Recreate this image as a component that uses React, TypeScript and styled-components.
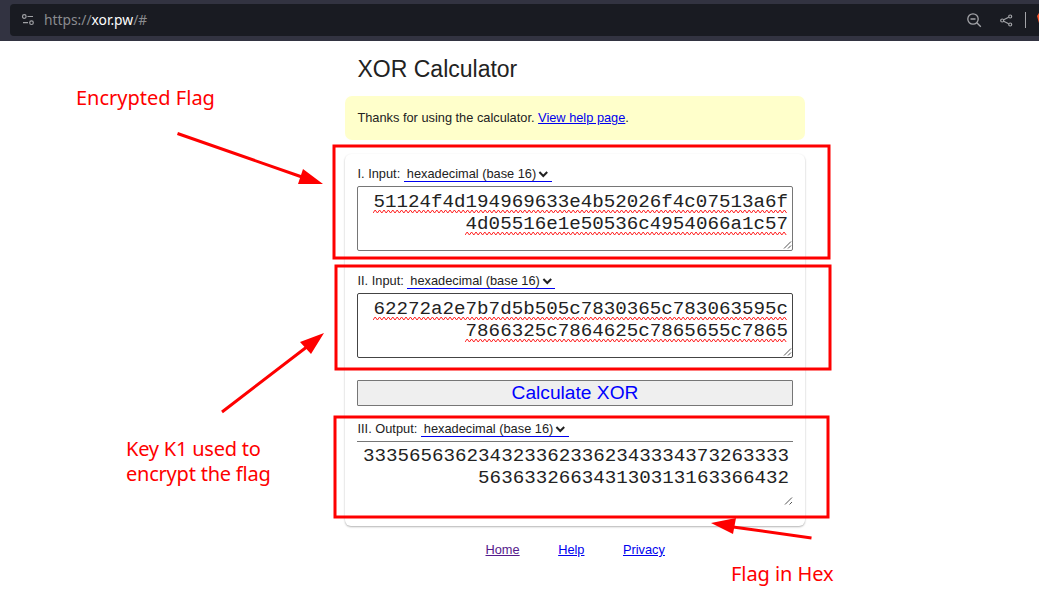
import React from "react";
import styled, { createGlobalStyle } from "styled-components";

const Global = createGlobalStyle`
  * { box-sizing: border-box; }
  body { margin: 0; background: #fff; overflow: hidden; color: #222; font-family: "Liberation Sans", Arial, sans-serif; font-size: 12.8px; }
`;
const Page = styled.div`position: relative; width: 1039px; height: 591px; overflow: hidden;`;
const Browser = styled.header`height: 41px; background: #323341; padding: 4px 0 5px 10px;`;
const Address = styled.div`
  height: 32px; background: #191b22; border-radius: 4px 0 0 4px; display: flex; align-items: center;
  padding-left: 11px; color: #8a8b8f; font: 13.8px "Noto Sans", sans-serif;
`;
const Url = styled.div`flex: 1; margin: 0 0 2px 9px; b { color: #fff; font-weight: 400; }`;
const Tools = styled.div`display: flex; align-items: center; width: 72px; height: 32px; overflow: hidden; svg { flex: none; }`;
const ShareIcon = styled.svg`margin-left: 18px;`;
const Divider = styled.i`width: 1px; height: 16px; background: #a3a4a8; margin: 0 11px 0 12px; flex: none;`;
const Main = styled.main`width: 460px; margin-left: 345px; padding-top: 14px;`;
const Title = styled.h1`margin: 0 0 12px 12.5px; font-size: 23px; line-height: 29px; font-weight: 400;`;
const Notice = styled.div`height: 44px; border-radius: 7px; background: #ffffcb; padding: 14px 12.4px; line-height: 16px;`;
const Link = styled.a<{ $visited?: boolean }>`color: ${(p) => (p.$visited ? "#551a8b" : "#0000ee")}; text-decoration: underline;`;
const Card = styled.section`
  margin-top: 14px; height: 372px; padding: 10px 12px; border-radius: 6px; box-shadow: 0 1px 2px rgba(0,0,0,.3);
`;
const Field = styled.div`height: 107px;`;
const Label = styled.div`display: flex; height: 19px; line-height: 20px; white-space: pre; padding-left: 0.5px;`;
const Select = styled.span`
  display: flex; align-items: center; height: 18px; margin-left: 3.6px; padding: 2px 0 0 3px; width: 148px;
  border-bottom: 1px solid #0000ee;
  svg { margin: 1px 0 0 2px; }
`;
const Area = styled.div<{ $border: string; $output?: boolean }>`
  position: relative; width: 436px; height: 65px; margin-top: 3px; padding: ${(p) => (p.$output ? "3px 4px 4px" : "4px")}; border: 1px solid ${(p) => p.$border};
  border-width: ${(p) => (p.$output ? "1px 0 0" : "1px")}; border-radius: ${(p) => (p.$output ? 0 : 2)}px;
  text-align: right; font: 19.2px/22px "Liberation Mono", monospace;
`;
const Line = styled.div`position: relative; height: 22px; white-space: nowrap;`;
const Squiggle = styled.svg`position: absolute; right: 0; top: 17px;`;
const Grip = styled.svg`position: absolute; right: 0; bottom: 0;`;
const Calculate = styled.button`
  display: block; width: 436px; height: 26px; margin: 2px 0 13px; padding: 0; border: 1px solid #767676; border-radius: 1px;
  background: #efefef; color: #0000ff; font: 19.2px/22px "Liberation Sans", sans-serif;
`;
const Footer = styled.footer`display: flex; gap: 38.5px; margin: 16px 0 0 140.5px; line-height: 16px;`;
const Overlay = styled.svg`position: absolute; inset: 0; pointer-events: none;`;
const Note = styled.div<{ $x: number; $y: number; $spacing: number }>`
  position: absolute; left: ${(p) => p.$x}px; top: ${(p) => p.$y}px; color: #fe0000; white-space: pre;
  font: 400 20px/25px "Noto Sans", sans-serif; letter-spacing: ${(p) => p.$spacing}px;
`;

const Mode = () => (
  <Select>
    hexadecimal (base 16)
    <svg width="11" height="8" viewBox="0 0 11 8"><path d="M1.4 2 5.3 6l3.9-4" fill="none" stroke="#222" strokeWidth="2" /></svg>
  </Select>
);
const Wave = ({ length }: { length: number }) => {
  let d = "M0 5";
  for (let x = 2.2, i = 0; x <= length; x += 2.2, i++) d += `L${x.toFixed(1)} ${i % 2 ? 5 : 2}`;
  return <Squiggle width={length} height="6"><path d={d} fill="none" stroke="#ff2020" strokeWidth="1" /></Squiggle>;
};
const TextBox = ({ lines, border, output }: { lines: string[]; border: string; output?: boolean }) => (
  <Area $border={border} $output={output}>
    {lines.map((line) => <Line key={line}>{line}{!output && <Wave length={line.length * 11.52} />}</Line>)}
    <Grip width="11" height="11"><path d={output ? "M3 9.5 10 2.5M7.5 9.5l2.5-2.5" : "M3 9.5 10 2.5M7 9.5l3-3"} stroke="#555" fill="none" /></Grip>
  </Area>
);

export default function App() {
  return (
    <Page>
      <Global />
      <Browser>
        <Address>
          <svg width="14" height="14" viewBox="0 0 14 14" fill="none" stroke="#a0a1a5" strokeWidth="1.2"><circle cx="3.3" cy="3.5" r="1.8" /><path d="M6.5 3.5H12M2 9.7h5" /><circle cx="10.5" cy="9.7" r="1.8" /></svg>
          <Url>https://<b>xor.pw</b>/#</Url>
          <Tools>
            <svg width="15" height="15" viewBox="0 0 15 15" fill="none" stroke="#a3a4a8" strokeWidth="1.3"><circle cx="6" cy="6" r="5.2" /><path d="M3.5 6h5M9.8 9.8l4 4" /></svg>
            <ShareIcon width="13" height="13" viewBox="0 0 13 13" fill="none" stroke="#a3a4a8" strokeWidth="1.2"><circle cx="2.2" cy="6.5" r="1.5" /><circle cx="10.2" cy="2.5" r="1.5" /><circle cx="10.2" cy="10.5" r="1.5" /><path d="m3.7 5.7 5-2.5M3.7 7.3l5 2.5" /></ShareIcon>
            <Divider />
            <svg width="12" height="16" viewBox="0 0 12 16"><path d="m0 4 2-3 7-1 3 3v10l-6 3-4-5z" fill="#fb542b" /></svg>
          </Tools>
        </Address>
      </Browser>
      <Main>
        <Title>XOR Calculator</Title>
        <Notice>Thanks for using the calculator. <Link>View help page</Link>.</Notice>
        <Card>
          <Field><Label>I. Input:<Mode /></Label><TextBox border="#767676" lines={["51124f4d194969633e4b52026f4c07513a6f", "4d05516e1e50536c4954066a1c57"]} /></Field>
          <Field><Label>II. Input:<Mode /></Label><TextBox border="#444" lines={["62272a2e7b7d5b505c7830365c783063595c", "7866325c7864625c7865655c7865"]} /></Field>
          <Calculate>Calculate XOR</Calculate>
          <Label>III. Output:<Mode /></Label>
          <TextBox border="#767676" output lines={["3335656362343233623362343334373263333", "563633266343130313163366432"]} />
        </Card>
        <Footer><Link $visited>Home</Link><Link>Help</Link><Link>Privacy</Link></Footer>
      </Main>
      <Overlay width="1039" height="591">
        <g fill="none" stroke="#fe0000" strokeWidth="3">
          <rect x="334" y="146" width="495" height="112" /><rect x="336" y="266" width="494" height="103" /><rect x="335" y="417" width="493" height="100" />
          <path d="M177.5 133.5 302 177M222 412 308 346M811.5 538 733 527" />
        </g>
        <path d="M323 184 303 169 298 184ZM324 333 300 342 311 354ZM711 523 736 518 733 534Z" fill="#fe0000" />
      </Overlay>
      <Note $x={76} $y={85} $spacing={0}>Encrypted Flag</Note>
      <Note $x={126} $y={436} $spacing={-0.22}>{"Key K1 used to\nencrypt the flag"}</Note>
      <Note $x={731} $y={561} $spacing={-0.07}>Flag in Hex</Note>
    </Page>
  );
}
